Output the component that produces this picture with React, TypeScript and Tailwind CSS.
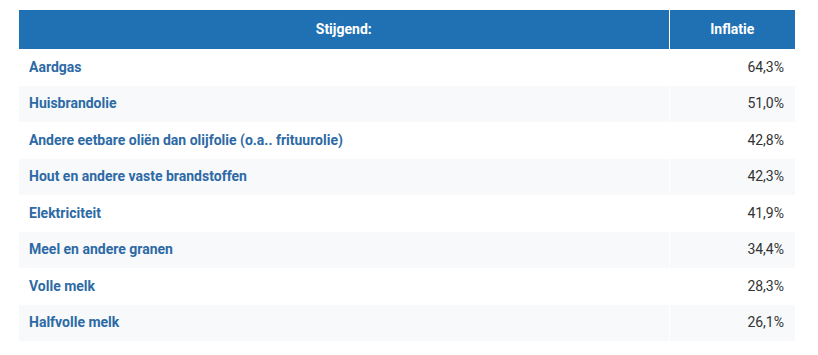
const rows: [string, string][] = [
  ["Aardgas", "64,3%"],
  ["Huisbrandolie", "51,0%"],
  ["Andere eetbare oliën dan olijfolie (o.a.. frituurolie)", "42,8%"],
  ["Hout en andere vaste brandstoffen", "42,3%"],
  ["Elektriciteit", "41,9%"],
  ["Meel en andere granen", "34,4%"],
  ["Volle melk", "28,3%"],
  ["Halfvolle melk", "26,1%"],
];

export default function App() {
  return (
    <div className="w-[818px] h-[355px] bg-white pt-[10px] pl-[19px] font-['Roboto',sans-serif]">
      <table className="w-[776px] border-collapse text-[14px]">
        <thead>
          <tr className="h-[39px] bg-[#2071b3] text-white font-bold">
            <th className="w-[650px] text-center border-r border-white">Stijgend:</th>
            <th className="text-center">Inflatie</th>
          </tr>
        </thead>
        <tbody>
          {rows.map(([label, value], i) => (
            <tr key={label} className={i % 2 === 0 ? "h-[36.5px] bg-white" : "h-[36.5px] bg-[#f7f9fb]"}>
              <td className="pl-[10px] font-bold text-[#2d6aa5] border-r border-white">{label}</td>
              <td className="pr-[11px] text-right text-[#333333]">{value}</td>
            </tr>
          ))}
        </tbody>
      </table>
    </div>
  );
}
